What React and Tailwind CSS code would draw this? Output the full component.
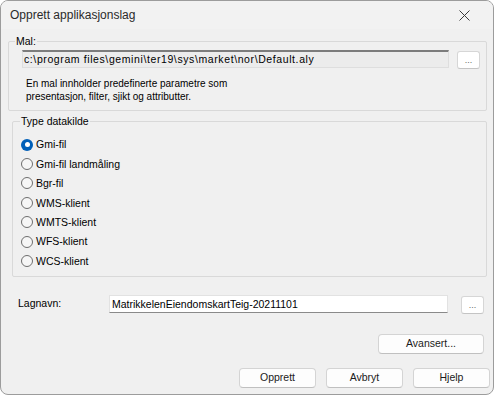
import React from 'react';

const font = { fontFamily: '"Liberation Sans", Arial, sans-serif' };

function DotsButton({ className = '' }) {
  return (
    <button className={`w-[23px] h-[18px] shrink-0 bg-white border border-[#d6d6d6] border-b-[#c4c4c4] rounded-[3px] flex items-center justify-center text-[9px] leading-none text-[#6b6b6b] ${className}`}>
      ...
    </button>
  );
}

function Button({ children, className = '' }) {
  return (
    <button className={`h-[20px] bg-[#fdfdfd] border border-[#d4d4d4] border-b-[#c0c0c0] rounded-[4px] flex items-center justify-center text-[10.5px] text-[#1b1b1b] ${className}`}>
      {children}
    </button>
  );
}

const types = ['Gmi-fil', 'Gmi-fil landmåling', 'Bgr-fil', 'WMS-klient', 'WMTS-klient', 'WFS-klient', 'WCS-klient'];

export default function App() {
  return (
    <div className="w-[496px] h-[396px] bg-white" style={font}>
      <div className="w-[494px] h-[395px] bg-[#f0f0f0] border border-[#9c9c9c] rounded-[8px] overflow-hidden flex flex-col text-black">
        {/* title bar */}
        <div className="h-[28px] shrink-0 flex items-center justify-between pl-[9px] pr-[23px] bg-[#f2f2f2]">
          <span className="text-[12px] text-[#2a2a2a]">Opprett applikasjonslag</span>
          <svg width="11" height="11" viewBox="0 0 11 11" className="text-[#3a3a3a]">
            <path d="M0.5 0.5 L10.5 10.5 M10.5 0.5 L0.5 10.5" stroke="currentColor" strokeWidth="1" fill="none" />
          </svg>
        </div>

        {/* Mal */}
        <div className="relative mt-[12px] ml-[7px] mr-[6px] h-[70px] shrink-0 border border-[#d9d9d9] rounded-[2px] pt-[8px] pl-[13px] pr-[6px]">
          <span className="absolute -top-[7px] left-[6px] px-[1px] bg-[#f0f0f0] text-[10.5px] leading-[13px]">Mal:</span>
          <div className="flex items-start gap-[8px]">
            <div className="w-[427px] h-[18px] bg-[#ececec] border border-[#dedede] border-t-2 border-t-[#7c7c7c] flex items-center pl-[1px] text-[10.5px] tracking-[0.6px] leading-none whitespace-nowrap overflow-hidden">
              c:\program files\gemini\ter19\sys\market\nor\Default.aly
            </div>
            <DotsButton className="mt-[1px]" />
          </div>
          <p className="mt-[8px] pl-[4px] text-[10px] leading-[13px]">
            En mal innholder predefinerte parametre som
            <br />
            presentasjon, filter, sjikt og attributter.
          </p>
        </div>

        {/* Type datakilde */}
        <div className="relative mt-[10px] ml-[11px] mr-[6px] h-[156px] shrink-0 border border-[#d9d9d9] rounded-[2px] pt-[13px] pl-[8px]">
          <span className="absolute -top-[7px] left-[7px] px-[1px] bg-[#f0f0f0] text-[10.5px] leading-[13px]">Type datakilde</span>
          <div className="flex flex-col">
            {types.map((t, i) => (
              <div key={t} className="h-[19.4px] flex items-center gap-[3px]">
                {i === 0 ? (
                  <span className="w-[12px] h-[12px] rounded-full bg-[#005fb8] flex items-center justify-center">
                    <span className="w-[5px] h-[5px] rounded-full bg-white" />
                  </span>
                ) : (
                  <span className="w-[12px] h-[12px] rounded-full border border-[#6e6e6e] bg-[#f6f6f6]" />
                )}
                <span className="text-[10.5px] leading-none">{t}</span>
              </div>
            ))}
          </div>
        </div>

        {/* Lagnavn */}
        <div className="mt-[18px] ml-[17px] flex items-start shrink-0">
          <span className="w-[91px] h-[18px] flex items-center text-[10.5px]">Lagnavn:</span>
          <div className="w-[339px] h-[18px] bg-white border border-[#e2e2e2] border-b-[#8a8a8a] flex items-center pl-[2px] text-[10.5px] leading-none">
            MatrikkelenEiendomskartTeig-20211101
          </div>
          <DotsButton className="ml-[13px] mt-[1px]" />
        </div>

        <div className="mt-[20px] mr-[9px] flex justify-end shrink-0">
          <Button className="w-[106px]">Avansert...</Button>
        </div>

        <div className="mt-[14px] mr-[3px] flex justify-end gap-[10px] shrink-0">
          <Button className="w-[77px]">Opprett</Button>
          <Button className="w-[77px]">Avbryt</Button>
          <Button className="w-[77px]">Hjelp</Button>
        </div>
      </div>
    </div>
  );
}
